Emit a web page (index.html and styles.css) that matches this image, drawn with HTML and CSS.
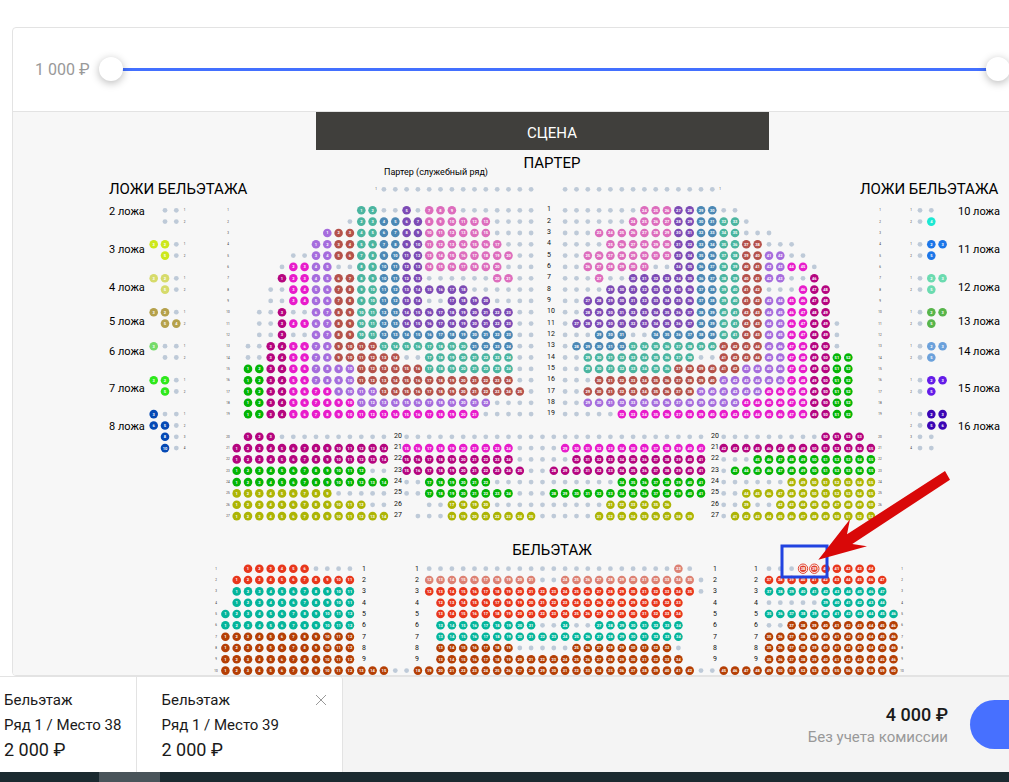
FILE: index.html
```html
<!DOCTYPE html>
<html lang="ru">
<head>
<meta charset="utf-8">
<title>Выбор мест</title>
<link rel="stylesheet" href="styles.css">
</head>
<body>
<main class="hall">
  <section class="prices" aria-label="Фильтр по цене">
    <label class="prices__label" for="price-min">1 000 ₽</label>
    <div class="range">
      <input class="range__input" id="price-min" type="range" min="0" max="100" value="0">
      <input class="range__input" type="range" min="0" max="100" value="100" aria-label="Максимальная цена">
    </div>
  </section>
  <section class="map" aria-label="Схема зала">
    <svg class="map__svg" id="map" viewBox="13 112 1015 564">
      <rect class="stage" x="316" y="112" width="453" height="38"/>
      <text class="title title--stage" x="552" y="138">СЦЕНА</text>
      <text class="title" x="552" y="168">ПАРТЕР</text>
      <text class="service" x="384" y="175">Партер (служебный ряд)</text>
      <text class="title title--left" x="109" y="194">ЛОЖИ БЕЛЬЭТАЖА</text>
      <text class="title title--left" x="860" y="194">ЛОЖИ БЕЛЬЭТАЖА</text>
      <text class="title" x="552" y="555">БЕЛЬЭТАЖ</text>
      <g id="seats"></g>
      <rect class="frame" x="782" y="546" width="45" height="31"/>
      <path class="arrow" d="M818.3 559.7 850 519.3 847 534.3 945 471 950 479.7 852.3 544 867 546.3z"/>
    </svg>
  </section>
</main>
<footer class="basket">
  <ul class="tickets">
    <li class="ticket">
      <div>
        <div>Бельэтаж</div>
        <div>Ряд 1 / Место 38</div>
        <div class="ticket__price">2 000 ₽</div>
      </div>
    </li>
    <li class="ticket">
      <div>
        <div>Бельэтаж</div>
        <div>Ряд 1 / Место 39</div>
        <div class="ticket__price">2 000 ₽</div>
      </div>
      <button class="ticket__close" type="button" aria-label="Удалить">
        <svg width="12" height="12" viewBox="0 0 12 12"><path d="M1 1 11 11M11 1 1 11"/></svg>
      </button>
    </li>
  </ul>
  <div class="total">
    <div class="total__sum">4 000 ₽</div>
    <div class="total__note">Без учета комиссии</div>
  </div>
  <button class="buy" type="button" aria-label="Оформить"></button>
</footer>
<div class="taskbar"><div class="taskbar__item"></div></div>
<script src="seats.js"></script>
</body>
</html>
```
FILE: styles.css
```css
* { box-sizing: border-box; }

body {
  margin: 0;
  height: 100vh;
  display: flex;
  flex-direction: column;
  overflow: hidden;
  background: #fff;
  color: #1a1a1a;
  font-family: Roboto, "Liberation Sans", sans-serif;
  font-size: 15px;
}

.hall {
  flex: 1;
  min-height: 0;
  display: flex;
  flex-direction: column;
  margin: 27px -20px 0 12px;
  border: 1px solid #e3e3e3;
  border-radius: 4px;
  overflow: hidden;
}

.prices {
  flex: none;
  display: flex;
  align-items: center;
  gap: 9px;
  height: 84px;
  padding: 0 18px 1px 22px;
  border-bottom: 1px solid #e3e3e3;
}
.prices__label { color: #999; font-size: 16px; white-space: nowrap; }

.range {
  flex: 1;
  display: grid;
  align-items: center;
  background: linear-gradient(#4370ff, #4370ff) center / calc(100% - 24px) 3px no-repeat;
}
.range__input {
  grid-area: 1 / 1;
  appearance: none;
  width: 100%;
  height: 24px;
  margin: 0;
  background: none;
  pointer-events: none;
}
.range__input::-webkit-slider-thumb {
  appearance: none;
  width: 24px;
  height: 24px;
  border-radius: 50%;
  background: #fff;
  box-shadow: 0 2px 8px rgba(0, 0, 0, .28);
  pointer-events: auto;
}

.map { flex: 1; min-height: 0; overflow: hidden; background: #f7f7f7; }
.map__svg { display: block; width: 100%; }

.stage { fill: #403f3c; }
.title { font-size: 15px; text-anchor: middle; fill: #000; }
.title--stage { fill: #fff; }
.title--left { text-anchor: start; }
.service { font-size: 9px; fill: #000; }
.loge { font-size: 11px; fill: #000; }
.row { font-size: 7px; fill: #111; }
.mark { font-size: 3px; text-anchor: middle; fill: #333; }
.free { fill: #becad8; }
.num { font-size: 4px; font-weight: 700; text-anchor: middle; fill: #fff; }
.ring { fill: #fff; stroke: #e0402c; stroke-width: 1; }
.frame { fill: none; stroke: #2143e0; stroke-width: 3; }
.arrow { fill: #d90808; }

.basket {
  flex: none;
  display: flex;
  align-items: center;
  height: 96px;
  background: #f4f4f4;
  border-top: 1px solid #e3e3e3;
  overflow: hidden;
}

.tickets {
  flex: 1;
  align-self: stretch;
  display: flex;
  margin: 0 0 0 -20px;
  padding: 0;
  list-style: none;
}
.ticket {
  display: flex;
  align-items: flex-start;
  gap: 36px;
  padding: 11px 15px 0 24px;
  background: #fff;
  border-right: 1px solid #e3e3e3;
  line-height: 25px;
  white-space: nowrap;
}
.ticket:last-child { border-top-right-radius: 3px; }
.ticket__price { font-size: 18px; line-height: 24px; }
.ticket__close {
  width: 12px;
  height: 12px;
  margin-top: 6px;
  padding: 0;
  border: 0;
  background: none;
}
.ticket__close svg { display: block; fill: none; stroke: #999; }

.total { text-align: right; white-space: nowrap; line-height: 23px; padding-top: 2px; }
.total__sum { font-size: 18px; font-weight: 500; }
.total__note { color: #999; }

.buy {
  flex: none;
  width: 180px;
  height: 49px;
  margin: 0 -141px 0 22px;
  border: 0;
  border-radius: 25px;
  background: #4770ff;
}

.taskbar { flex: none; height: 10px; padding-left: 99px; background: #1b2a30; }
.taskbar__item { width: 61px; height: 100%; background: #49545a; }
```
FILE: seats.js
```js
const PITCH = 11.325;
const X0 = 236.7;
const Y_STALLS = 210.3;
const Y_CIRCLE = 568.7;

const COLORS = {
  t: '#4bb5a0', b: '#4b88b5', p: '#7d4bb5', k: '#dd6dbd', l: '#a66ddd',
  r: '#b5524b', m: '#e81ccb', d: '#b5057f', g: '#05b505', y: '#adb505',
  R: '#e8371c', s: '#dd8173', T: '#05b59b', o: '#b53f05', X: '#e0402c'
};

// Each entry: first column, then runs of "<category><count>".
// "." is an unavailable seat, "_" is an aisle.
const STALLS = [
  '11 t2 .2 p1 .1 k3 .7 _2 .7 k3 p2 b2 .2',
  '10 .1 t2 b2 p2 k6 .4 _2 .6 k4 p2 b2 t2 .1',
  '8 l1 r2 t2 b2 p2 k6 .4 _2 .3 k7 p2 b2 t2 .3',
  '7 l2 r2 t2 b2 p2 k7 .3 _2 .4 k6 p2 b2 t2 r2 .3',
  '5 .2 l2 r2 t2 b2 p2 k8 .2 _2 .2 k8 p2 b2 t2 r2 l2 .2',
  '4 .1 m2 l2 .2 t2 b2 p2 k7 .3 _2 .2 k6 .2 p2 b2 t2 r2 l2 m2 .1',
  '4 d1 m2 l2 r2 t2 b2 p2 .6 k2 .2 _2 .3 k1 .2 p6 b2 t2 r2 l2 .2 d1',
  '3 .2 m2 l2 r2 t2 b2 p6 .6 _2 .4 p8 b2 t2 r2 .3 m1 d2',
  '3 .2 m2 l2 r2 t2 b2 p2 .2 p4 .4 _2 .2 p10 b2 t2 r2 l2 m2 d2',
  '2 .2 d1 .2 l2 r2 t2 b2 p10 .2 _2 .2 p10 b2 t2 r2 l2 m2 d2',
  '2 .2 d1 m2 l2 r2 t2 b2 p10 .2 _2 .1 p11 b2 t2 r2 l2 m2 d2 .1',
  '2 .2 d1 .2 l2 r2 t2 b12 .2 _2 .3 b3 .2 b6 t2 r2 l2 m2 d2 .1',
  '1 .2 d2 m2 l2 r4 t8 b4 .2 _2 .1 b5 t8 r4 l2 m2 d2 .1',
  '1 .2 d2 m2 l2 r6 .2 t8 .2 _2 .2 t10 .2 r4 l2 m2 d2 g2',
  '1 g2 d2 m2 l4 r6 t8 .2 _2 .2 t8 r6 l4 m2 d2 g2',
  '1 g2 d2 m2 l4 r14 .2 _2 .3 r11 l6 m2 d2 g2',
  '1 g2 d2 m4 l4 r13 .1 _2 .2 r10 l6 m4 d2 g2',
  '1 g2 d2 m6 l12 .4 _2 .2 l14 m6 d2 g2',
  '1 g2 d2 m17 .5 _2 .5 m17 d2 g2',
  '',
  '1 d3 .10 _1 .27 _1 .9 d4',
  '0 d14 _1 m10 .4 m13 _1 d14',
  '0 d14 _1 d10 .5 d12 _1 .3 g11',
  '0 g12 .2 _1 d11 .2 d14 _1 .1 g13',
  '0 g14 _1 .2 g6 .11 g8 _1 .6 y8',
  '0 y9 .5 _1 .2 g8 .3 g14 _1 .2 y12',
  '0 y12 .2 _3 .2 y4 .10 y6 _4 .2 y1 .2 y9',
  '0 y14 _2 .3 y8 .5 y9 _2 .1 y13'
];

const CIRCLE = [
  '1 R6 .4 _6 .22 s1 .1 _6 .3 X2 R5',
  '0 R11 _6 s10 .2 s12 .1 _5 R11',
  '0 T11 _6 R24 .1 _5 T11',
  '0 T11 _7 R22 _7 .5 T6',
  '-1 T12 _7 R22 _7 T12',
  '-1 T12 _7 T9 .2 T1 .2 T8 _7 .2 o10',
  '-1 o12 _7 T22 _7 o12',
  '-1 o12 _7 o7 .5 o9 .1 _7 o12',
  '-1 o12 _7 o22 _7 o12',
  '-1 o15 .2 o25 .2 o16'
];

// Box name, label baseline, first row index, colour, seats per row.
const LEFT_BOXES = [
  ['2 ложа', 215, 0, '', ['_ . .', '_ . .']],
  ['3 ложа', 253, 3, '#cde81c', ['3 2 .', '_ 5 .']],
  ['4 ложа', 291, 6, '#d6db6b', ['3 2 .', '_ 5 .']],
  ['5 ложа', 325, 9, '#b5a14b', ['3 2 .', '_ 5 4']],
  ['6 ложа', 355, 12, '#76db6b', ['3 . .', '_ . .']],
  ['7 ложа', 392, 15, '#2ee81c', ['3 2 .', '_ 5 .']],
  ['8 ложа', 430, 18, '#0549b5', ['3 . .', '6 5 .', '_ 8 .', '_ 10 .']]
];
const RIGHT_BOXES = [
  ['10 ложа', 215, 0, '#1ce8d3', ['. .', '. 4']],
  ['11 ложа', 253, 3, '#1c76e8', ['. 2 3', '. 5']],
  ['12 ложа', 291, 6, '#6bdbb0', ['. 2 3', '. 5']],
  ['13 ложа', 325, 9, '#57b54b', ['. 2 3', '. 5']],
  ['14 ложа', 355, 12, '#6ba1db', ['. 2 3', '. 5']],
  ['15 ложа', 392, 15, '#641ce8', ['. 2 3', '. 5']],
  ['16 ложа', 430, 18, '#3b05b5', ['. 2 3', '. 5 6', '. .', '. .']]
];

const out = [];
const text = (cls, x, y, s) =>
  out.push(`<text class="${cls}" x="${x.toFixed(1)}" y="${y.toFixed(1)}">${s}</text>`);

function seat(x, y, color, n, chosen) {
  const at = `cx="${x.toFixed(1)}" cy="${y.toFixed(1)}"`;
  if (!color) {
    out.push(`<circle class="free" ${at} r="2.4"/>`);
    return;
  }
  if (chosen) out.push(`<circle class="ring" ${at} r="4.7"/>`);
  out.push(`<circle ${at} r="${chosen ? 3.3 : 4.3}" fill="${color}"/>`);
  text('num', x, y + 1.4, n);
}

function drawRow(spec, y) {
  const [start, ...runs] = spec.split(' ');
  let col = Number(start);
  let n = 1;
  for (const run of runs) {
    const kind = run[0];
    const count = Number(run.slice(1));
    for (let i = 0; i < count; i++, col++) {
      if (kind === '_') continue;
      seat(X0 + col * PITCH, y, COLORS[kind], n++, kind === 'X');
    }
  }
}

drawRow('13 .14 _2 .14', 189.3);
text('mark', 376, 190, 1);
text('mark', 720, 190, 1);

let number = 0;
STALLS.forEach((spec, i) => {
  if (!spec) return;
  number++;
  const y = Y_STALLS + i * PITCH;
  drawRow(spec, y);
  text('mark', 228, y + 1, number);
  text('mark', 880, y + 1, number);
  if (i < 19) {
    text('row', 547, y + 1, number);
  } else {
    text('row', 394, y + 1, number);
    text('row', 711, y + 1, number);
  }
});

CIRCLE.forEach((spec, i) => {
  const y = Y_CIRCLE + i * PITCH;
  drawRow(spec, y);
  text('mark', 216, y + 1, i + 1);
  text('mark', 902, y + 1, i + 1);
  if (i < 9) [362, 415, 713, 754].forEach(x => text('row', x, y + 2, i + 1));
});

function drawBoxes(boxes, labelX, seatX, markX) {
  for (const [name, labelY, first, color, rows] of boxes) {
    text('loge', labelX, labelY, name);
    rows.forEach((row, r) => {
      const y = Y_STALLS + (first + r) * PITCH;
      text('mark', markX, y + 1, r + 1);
      row.split(' ').forEach((s, c) => {
        if (s !== '_') seat(seatX + c * PITCH, y, s === '.' ? '' : color, s);
      });
    });
  }
}
drawBoxes(LEFT_BOXES, 109, 153.7, 184.5);
drawBoxes(RIGHT_BOXES, 958, 920, 911);

document.getElementById('seats').innerHTML = out.join('');
```
